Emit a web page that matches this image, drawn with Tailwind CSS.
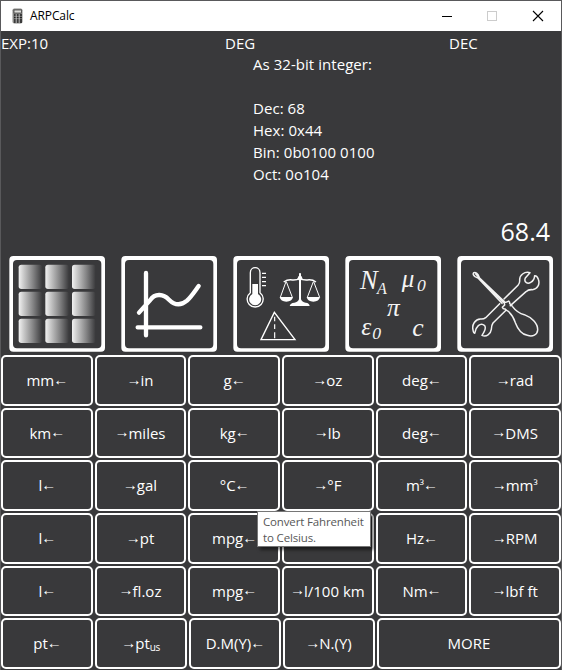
<!DOCTYPE html>
<html lang="en">
<head>
<meta charset="utf-8">
<title>ARPCalc</title>
<script src="https://cdn.jsdelivr.net/npm/@tailwindcss/browser@4"></script>
</head>
<body class="h-[670px] w-[562px] overflow-hidden bg-[#39393b] font-['Open_Sans','Noto_Sans',sans-serif] text-white">
<div class="relative flex h-[670px] w-[562px] flex-col border-l border-t border-r border-[#59595b] bg-[#39393b]">
  <header class="flex h-[30px] shrink-0 items-center bg-white text-black">
    <svg class="ml-[11px] h-4 w-3" viewBox="0 0 12 16">
      <rect x=".5" y=".5" width="10" height="15" rx="1.8" fill="#8a8a88"/>
      <rect x="2" y="2" width="7.500" height="3" fill="#dededa" stroke="#333" stroke-width=".7"/>
      <path d="M2 7h8M2 9.500h8M2 12h8M2 14h8" stroke="#222" stroke-width="1.500"/>
      <path d="M4.200 6v9M7.200 6v9" stroke="#ddd" stroke-width=".8"/>
    </svg>
    <span class="ml-[6px] text-[12px] leading-[16px] tracking-[-0.1px]">ARPCalc</span>
    <svg class="ml-auto mr-[17px] h-[12px] w-[102px]" viewBox="0 0 102 12" fill="none">
      <path d="M0 6.500h10" stroke="#000"/>
      <rect x="45.500" y="1.500" width="9" height="9" stroke="#ccc"/>
      <path d="M91 1l10 10M101 1L91 11" stroke="#000" stroke-width="1.100"/>
    </svg>
  </header>
  <div class="grid h-[22px] shrink-0 grid-cols-[224px_224px_112px] text-[15px] leading-[25px]">
    <span>EXP:10</span><span>DEG</span><span>DEC</span>
  </div>
  <div class="h-[159px] shrink-0 whitespace-pre pl-[252px] text-[15px] leading-[22px] tracking-[0.05px]">As 32-bit integer:

Dec: 68
Hex: 0x44
Bin: 0b0100 0100
Oct: 0o104</div>
  <div class="h-[38px] shrink-0 pr-[11px] text-right text-[25px] leading-[38px]">68.4</div>
  <nav class="flex h-[105px] shrink-0 [&>svg]:h-[110px] [&>svg]:w-[112px] [&>svg]:shrink-0">
    <svg viewBox="0 0 336 330">
      <defs><linearGradient id="key"><stop offset="0" stop-color="#f2f2f2"/><stop offset=".2" stop-color="#cccccc"/><stop offset=".6" stop-color="#858586"/><stop offset="1" stop-color="#39393b"/></linearGradient></defs>
      <path fill="#fff" fill-rule="evenodd" d="M37 18H300Q312 18 312 30V293Q312 305 300 305H37Q25 305 25 293V30Q25 18 37 18ZM48 30Q36 30 36 42V283Q36 295 48 295H289Q301 295 301 283V42Q301 30 289 30Z"/>
      <g fill="url(#key)">
        <rect x="53" y="44" width="71" height="73" rx="8"/><rect x="133" y="44" width="71" height="73" rx="8"/><rect x="213" y="44" width="71" height="73" rx="8"/>
        <rect x="53" y="125" width="71" height="73" rx="8"/><rect x="133" y="125" width="71" height="73" rx="8"/><rect x="213" y="125" width="71" height="73" rx="8"/>
        <rect x="53" y="206" width="71" height="73" rx="8"/><rect x="133" y="206" width="71" height="73" rx="8"/><rect x="213" y="206" width="71" height="73" rx="8"/>
      </g>
    </svg>
    <svg viewBox="0 0 336 330">
      <path fill="#fff" fill-rule="evenodd" d="M37 18H300Q312 18 312 30V293Q312 305 300 305H37Q25 305 25 293V30Q25 18 37 18ZM48 30Q36 30 36 42V283Q36 295 48 295H289Q301 295 301 283V42Q301 30 289 30Z"/>
      <path d="M99 69V256M74 232H262M78 188L111 151C127 127 152 133 168 149C184 165 203 168 222 152C236 139 248 120 257 108" fill="none" stroke="#fff" stroke-width="13" stroke-linecap="round" stroke-linejoin="round"/>
    </svg>
    <svg viewBox="0 0 336 330">
      <path fill="#fff" fill-rule="evenodd" d="M37 18H300Q312 18 312 30V293Q312 305 300 305H37Q25 305 25 293V30Q25 18 37 18ZM48 30Q36 30 36 42V283Q36 295 48 295H289Q301 295 301 283V42Q301 30 289 30Z"/>
      <g fill="none" stroke="#fff" stroke-width="4">
        <path d="M76 128V68C76 48 105 48 105 68V128A24 24 0 1 1 76 128Z"/>
        <path d="M111 70h12M111 82h12M111 95h12M111 107h12" stroke-width="3.500"/>
        <path d="M148 187L108 269H210Z"/>
        <path d="M149 200v14M149 223v14M149 247v18" stroke-width="3.500"/>
      </g>
      <path fill="#fff" d="M82 102H99V132A18 18 0 1 1 82 132Z"/>
      <g fill="none" stroke="#fff" stroke-width="3">
        <path d="M183 95L166 142M184 95L202 142M265 95L247 142M266 95L284 142"/>
        <path d="M176 96Q188 88 202 90Q216 91 224 84Q233 91 247 90Q262 88 273 96" stroke-width="4.500"/>
        <path d="M225 70V160" stroke-width="6"/>
      </g>
      <g fill="#fff">
        <circle cx="225" cy="85" r="7"/><path d="M225 68l5 15h-10z"/>
        <path d="M164 141H204Q201 155 184 155Q167 155 164 141ZM245 141H285Q282 155 265 155Q248 155 245 141Z"/>
        <path d="M194 168Q196 159 208 158Q219 157 222 148H228Q231 157 242 158Q253 159 254 168Z"/>
      </g>
    </svg>
    <svg viewBox="0 0 336 330">
      <path fill="#fff" fill-rule="evenodd" d="M37 18H300Q312 18 312 30V293Q312 305 300 305H37Q25 305 25 293V30Q25 18 37 18ZM48 30Q36 30 36 42V283Q36 295 48 295H289Q301 295 301 283V42Q301 30 289 30Z"/>
      <g class="font-['Liberation_Serif',serif] italic" fill="#f4f4f4">
        <text x="69" y="116" font-size="80" textLength="53" lengthAdjust="spacingAndGlyphs">N</text><text x="120" y="131" font-size="48">A</text>
        <text x="194" y="111" font-size="75">μ</text><text x="240" y="123" font-size="53">0</text>
        <text x="150" y="198" font-size="76">π</text>
        <text x="73" y="255" font-size="76">ε</text><text x="106" y="268" font-size="53">0</text>
        <text x="226" y="257" font-size="77">c</text>
      </g>
    </svg>
    <svg viewBox="0 0 336 330">
      <path fill="#fff" fill-rule="evenodd" d="M37 18H300Q312 18 312 30V293Q312 305 300 305H37Q25 305 25 293V30Q25 18 37 18ZM48 30Q36 30 36 42V283Q36 295 48 295H289Q301 295 301 283V42Q301 30 289 30Z"/>
      <g fill="none" stroke="#f2f2f2" stroke-width="4.500" stroke-linejoin="round" stroke-linecap="round">
        <path d="M165 147L207 106Q213 99 212 91C211 75 226 64 243 68L229 84Q225 94 232 98Q238 102 245 97Q256 92 257 77Q264 76 268 88C274 104 264 118 250 119Q238 118 231 125L184 167M152 161L110 203Q104 208 94 207C79 208 68 223 72 240Q73 249 77 250Q79 235 88 227Q98 219 107 227Q113 236 99 256C112 262 125 252 127 238Q127 226 132 219L171 181"/>
        <path d="M74 68Q82 65 87 74L91 83L165 154M74 68Q70 74 78 80L87 84L159 160M80 72L163 157"/>
        <path d="M165 154Q169 160 179 153Q183 157 182 161Q187 164 190 169Q205 189 226 194C247 202 267 220 266 240C265 255 251 261 235 256C215 252 205 234 199 218Q194 200 178 184Q171 181 169 177Q162 178 160 172L167 165Z"/>
      </g>
    </svg>
  </nav>
  <main class="flex h-[314px] shrink-0 flex-col gap-[2px] text-[15px] [&_button]:flex [&_button]:items-center [&_button]:justify-center [&_button]:whitespace-pre [&_button]:rounded-[5px] [&_button]:border-2 [&_button]:border-white [&_i]:mx-[-1px] [&_i]:mb-px [&_i]:font-['Liberation_Sans'] [&_i]:text-[15px] [&_i]:not-italic">
    <div class="grid flex-1 grid-cols-6 gap-[2px]">
      <button>mm<i>←</i></button><button><i>→</i>in</button><button>g<i>←</i></button><button><i>→</i>oz</button><button>deg<i>←</i></button><button><i>→</i>rad</button>
    </div>
    <div class="grid flex-1 grid-cols-6 gap-[2px]">
      <button>km<i>←</i></button><button><i>→</i>miles</button><button>kg<i>←</i></button><button><i>→</i>lb</button><button>deg<i>←</i></button><button><i>→</i>DMS</button>
    </div>
    <div class="grid flex-1 grid-cols-6 gap-[2px]">
      <button>l<i>←</i></button><button><i>→</i>gal</button><button>°C<i>←</i></button><button><i>→</i>°F</button><button>m<span class="text-[12px]">³</span><i>←</i></button><button><i>→</i>mm<span class="text-[12px]">³</span></button>
    </div>
    <div class="grid flex-1 grid-cols-6 gap-[2px]">
      <button>l<i>←</i></button><button><i>→</i>pt</button><button>mpg<i>←</i></button><button></button><button>Hz<i>←</i></button><button><i>→</i>RPM</button>
    </div>
    <div class="grid flex-1 grid-cols-6 gap-[2px]">
      <button>l<i>←</i></button><button><i>→</i>fl.oz</button><button>mpg<i>←</i></button><button><i>→</i>l/100 km</button><button>Nm<i>←</i></button><button><i>→</i>lbf ft</button>
    </div>
    <div class="grid flex-1 grid-cols-[92px_92px_92px_92px_184px] gap-[2px]">
      <button>pt<i>←</i></button><button><i>→</i>pt<span class="mt-[7px] text-[10px] tracking-[-0.5px]">us</span></button><button>D.M(Y)<i>←</i></button><button><i>→</i>N.(Y)</button><button>MORE</button>
    </div>
  </main>
  <div class="absolute left-[256px] top-[510px] h-[36px] w-[114px] border border-[#767676] bg-white pl-[5px] pt-[2px] text-[11.500px] leading-[16px] tracking-[-0.15px] text-[#575757] shadow-[3px_3px_3px_rgba(0,0,0,0.5)]">Convert Fahrenheit<br>to Celsius.</div>
</div>
</body>
</html>
